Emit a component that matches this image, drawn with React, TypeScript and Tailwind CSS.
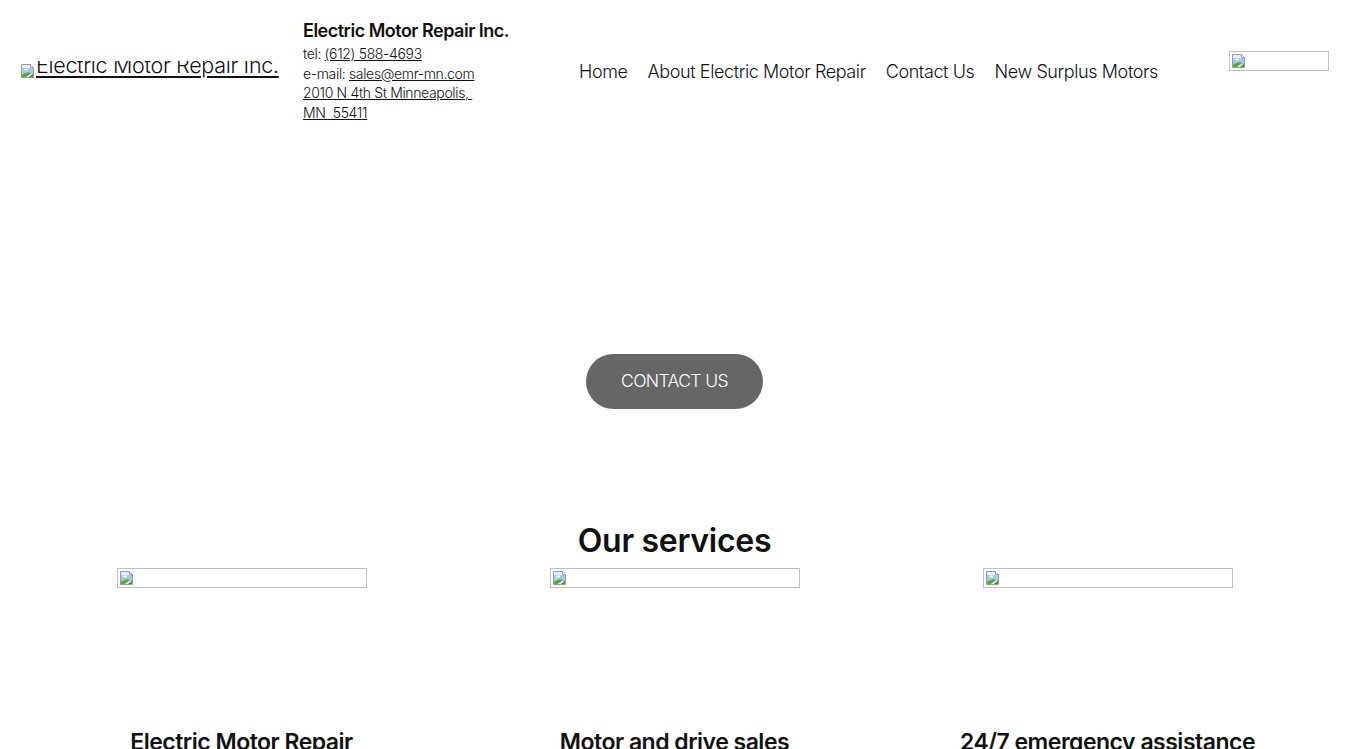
import React from "react";

const BrokenIcon = ({ className = "" }: { className?: string }) => (
  <svg width="16" height="16" viewBox="0 0 16 16" className={"shrink-0 " + className}>
    <path d="M1.5 1.5h9l3 3v10h-12z" fill="#e8eef8" stroke="#9a9a9a" />
    <path d="M10.5 1.5v3h3" fill="#fff" stroke="#9a9a9a" />
    <rect x="2" y="5" width="11" height="6" fill="#a8c8f0" />
    <ellipse cx="6" cy="6.5" rx="2" ry="1" fill="#fff" />
    <path d="M2 14V11.5L8 9l3 1-5 4z" fill="#4caf3a" />
    <path d="M9 14l4-3.5V14z" fill="#3f9a30" />
  </svg>
);

const BrokenImg = ({ w, h }: { w: number; h: number }) => (
  <div
    className="border border-[#c0c0c0] box-border flex items-start p-[1px]"
    style={{ width: w, height: h }}
  >
    <BrokenIcon />
  </div>
);

const font = { fontFamily: "Inter, 'Noto Sans', sans-serif" };

export default function App() {
  return (
    <div className="bg-white text-[#111] min-h-[749px] overflow-hidden" style={font}>
      <header className="flex items-center px-[20px] py-[20px]">
        <div className="w-[259px] h-[19px] overflow-hidden mt-[-2px]">
          <div className="flex items-start mt-[-7px]">
            <BrokenIcon className="mt-[9px]" />
            <span className="text-[21.5px] leading-[22px] font-light underline underline-offset-[3px] whitespace-nowrap tracking-[-0.3px]">
              Electric Motor Repair Inc.
            </span>
          </div>
        </div>
        <div className="ml-[24px] w-[205px]">
          <div className="text-[18px] leading-[22px] font-semibold tracking-[-0.5px] whitespace-nowrap">
            Electric Motor Repair Inc.
          </div>
          <div className="mt-[2px] text-[14px] leading-[19.5px] font-light tracking-[-0.35px]">
            <div>
              tel: <span className="underline">(612) 588-4693</span>
            </div>
            <div>
              e-mail: <span className="underline">sales@emr-mn.com</span>
            </div>
            <div className="underline">2010 N 4th St Minneapolis,&nbsp;</div>
            <div className="underline">MN&nbsp; 55411</div>
          </div>
        </div>
        <nav className="flex-1 flex justify-center gap-[20px] text-[18px] font-light tracking-[-0.4px] whitespace-nowrap">
          <span>Home</span>
          <span>About Electric Motor Repair</span>
          <span>Contact Us</span>
          <span>New Surplus Motors</span>
        </nav>
        <div className="mt-[-20px]">
          <BrokenImg w={100} h={20} />
        </div>
      </header>

      <section className="flex justify-center pt-[212px]">
        <button className="w-[177px] h-[55px] rounded-full bg-[#666666] text-white text-[17.5px] font-light tracking-[-0.6px]">
          CONTACT US
        </button>
      </section>

      <section className="mt-[112px]">
        <h2 className="text-center text-[32px] leading-[40px] font-semibold tracking-[-0.3px]">
          Our services
        </h2>
        <div className="grid grid-cols-3 px-[25px] mt-[7px]">
          {["Electric Motor Repair", "Motor and drive sales", "24/7 emergency assistance"].map((t) => (
            <div key={t} className="flex flex-col items-center">
              <BrokenImg w={250} h={20} />
              <div className="mt-[140px] text-[23px] leading-[28px] font-semibold tracking-[-0.5px] whitespace-nowrap">
                {t}
              </div>
            </div>
          ))}
        </div>
      </section>
    </div>
  );
}
